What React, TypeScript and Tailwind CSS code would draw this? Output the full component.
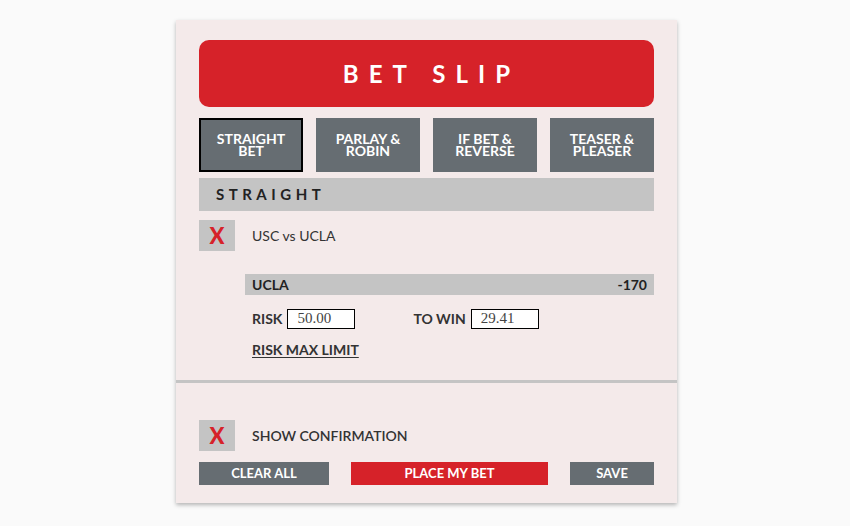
import { ReactNode } from "react";

const TABS = [
  ["STRAIGHT", "BET"],
  ["PARLAY &", "ROBIN"],
  ["IF BET &", "REVERSE"],
  ["TEASER &", "PLEASER"],
];

export default function App() {
  return (
    <div className="min-h-[526px] bg-[#fafafa] pt-[20px] font-['Lato','Liberation_Sans',sans-serif]">
      <div className="ml-[176px] w-[501px] bg-[#f4eaea] pb-[18px] pt-[20px] shadow-[0_2px_4px_rgba(0,0,0,0.28)]">
        <div className="px-[23px]">
          <div className="flex h-[67px] items-center justify-center rounded-[10px] bg-[#d62229] pl-[0.42em] text-[24px] font-bold tracking-[0.42em] text-white">
            BET SLIP
          </div>

          <div className="mt-[11px] grid grid-cols-4 gap-[13px]">
            {TABS.map(([a, b], i) => (
              <button
                key={a}
                className={
                  "flex h-[54px] flex-col items-center justify-center bg-[#666d72] text-[14px] font-bold leading-[12px] text-white " +
                  (i === 0 ? "border-2 border-black" : "")
                }
              >
                <span>{a}</span>
                <span>{b}</span>
              </button>
            ))}
          </div>

          <div className="mt-[6px] flex h-[33px] items-center bg-[#c4c4c4] pl-[17px] text-[15px] font-bold tracking-[0.3em] text-[#222]">
            STRAIGHT
          </div>

          <div className="mt-[9px] flex items-center gap-[17px]">
            <XBox />
            <span className="text-[14px] text-[#333]">USC vs UCLA</span>
          </div>

          <div className="ml-[46px] mt-[23px]">
            <div className="flex h-[21px] items-center justify-between bg-[#c4c4c4] px-[7px] text-[14px] font-bold text-[#222]">
              <span>UCLA</span>
              <span>-170</span>
            </div>
            <div className="mt-[13px] flex items-center pl-[7px] text-[14px] font-bold text-[#333]">
              <span>RISK</span>
              <Field value="50.00" className="ml-[5px]" />
              <span className="ml-[58px]">TO WIN</span>
              <Field value="29.41" className="ml-[5px]" />
            </div>
            <div className="mt-[10px] pl-[7px] text-[14px] font-bold text-[#333] underline underline-offset-2">
              RISK MAX LIMIT
            </div>
          </div>
        </div>

        <div className="mt-[20px] h-[3px] bg-[#c4c4c4]" />

        <div className="px-[23px]">
          <div className="mt-[37px] flex items-center gap-[17px]">
            <XBox />
            <span className="text-[14px] font-semibold text-[#333]">SHOW CONFIRMATION</span>
          </div>
          <div className="mt-[11px] flex items-center justify-between">
            <Btn className="w-[130px] bg-[#666d72]">CLEAR ALL</Btn>
            <Btn className="w-[197px] bg-[#d62229]">PLACE MY BET</Btn>
            <Btn className="w-[84px] bg-[#666d72]">SAVE</Btn>
          </div>
        </div>
      </div>
    </div>
  );
}

function XBox() {
  return (
    <div className="flex h-[31px] w-[36px] shrink-0 items-center justify-center bg-[#c4c4c4] text-[22px] font-black text-[#d62229]">
      X
    </div>
  );
}

function Field({ value, className }: { value: string; className?: string }) {
  return (
    <div
      className={
        "flex h-[20px] w-[68px] items-center border border-black bg-white pl-[9px] font-['Liberation_Serif',serif] text-[15px] font-normal text-[#444] " +
        (className ?? "")
      }
    >
      {value}
    </div>
  );
}

function Btn({ children, className }: { children: ReactNode; className: string }) {
  return (
    <button
      className={
        "flex h-[23px] items-center justify-center text-[13px] font-bold text-white " + className
      }
    >
      {children}
    </button>
  );
}
